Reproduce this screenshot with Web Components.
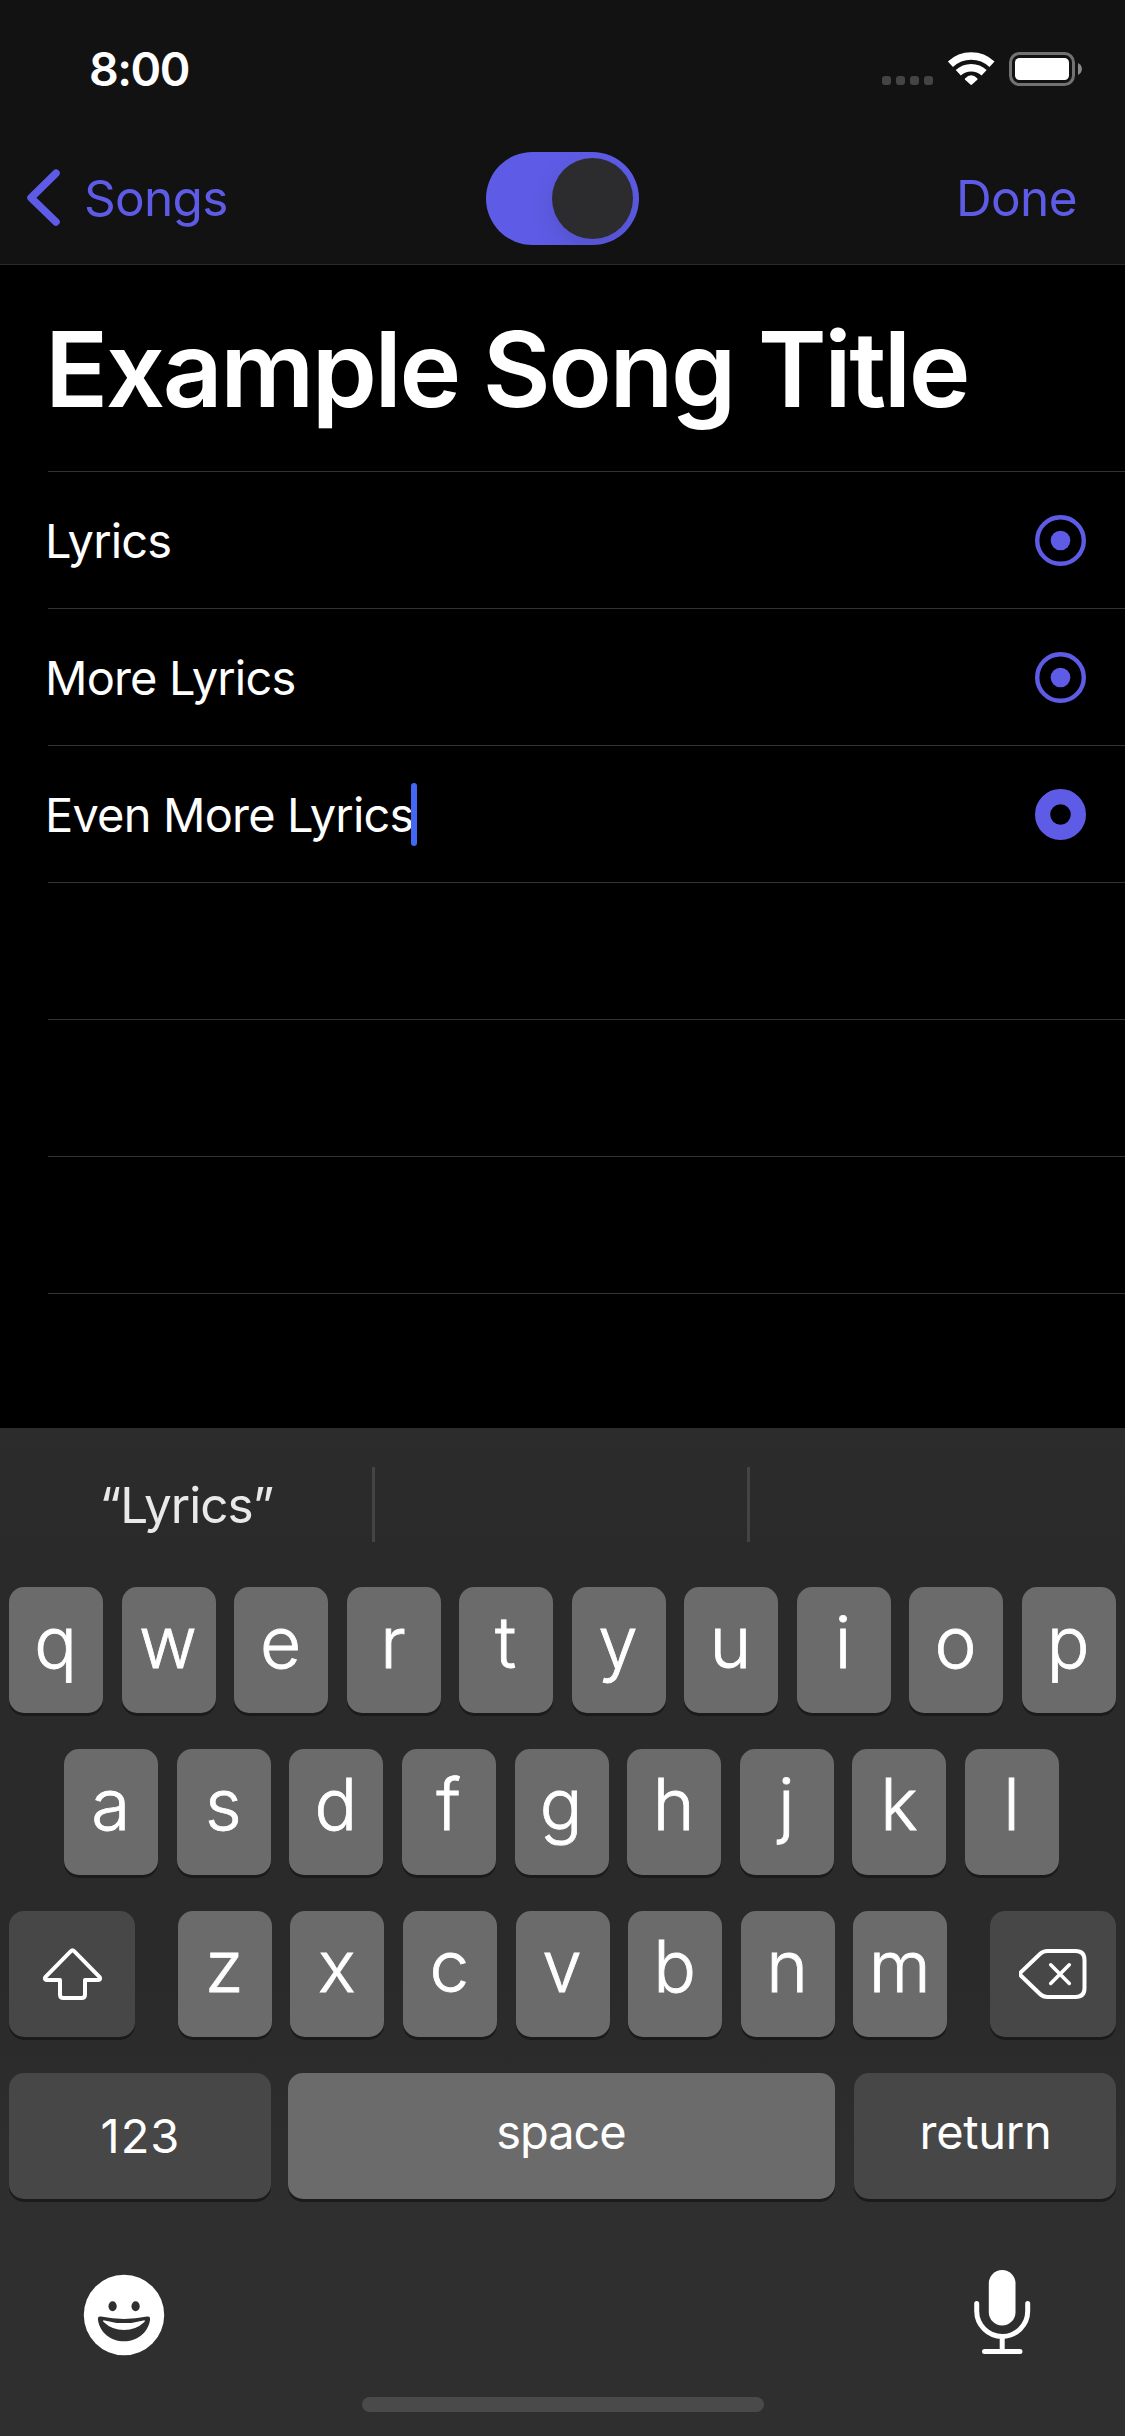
<!DOCTYPE html>
<html lang="en">
<head>
<meta charset="utf-8">
<title>Songs</title>
<style>
  html, body { margin: 0; background: #000; }
  body { font-family: Inter, "Liberation Sans", sans-serif; color: #fff; --accent: #5e5ce6; }
</style>
</head>
<body>
<song-app>
  <status-bar slot="status">8:00</status-bar>
  <nav-bar slot="nav"><span slot="back">Songs</span><toggle-switch slot="middle"></toggle-switch><span slot="action">Done</span></nav-bar>
  <song-title>Example Song Title</song-title>
  <lyric-row mark="dot">Lyrics</lyric-row>
  <lyric-row mark="dot">More Lyrics</lyric-row>
  <lyric-row mark="ring" editing>Even More Lyrics</lyric-row>
  <lyric-row></lyric-row>
  <lyric-row></lyric-row>
  <lyric-row></lyric-row>
  <lyric-row></lyric-row>
  <key-board slot="keyboard"></key-board>
</song-app>
<script>
const define = (name, html) => customElements.define(name, class extends HTMLElement {
  constructor() {
    super();
    this.attachShadow({ mode: 'open' });
  }
  connectedCallback() {
    const t = document.createElement('template');
    t.innerHTML = typeof html === 'function' ? html(this) : html;
    this.shadowRoot.replaceChildren(t.content.cloneNode(true));
  }
});

define('song-app', `
<style>
  :host { display: flex; flex-direction: column; width: 1125px; height: 2436px; background: #000; overflow: hidden; }
  header { flex: none; height: 264px; background: #121212; border-bottom: 1px solid #2b2b2b; }
  main { flex: none; height: 1163px; overflow: hidden; }
</style>
<header><slot name="status"></slot><slot name="nav"></slot></header>
<main><slot></slot></main>
<slot name="keyboard"></slot>`);

define('status-bar', `
<style>
  :host { display: flex; box-sizing: border-box; height: 132px; padding: 5px 43px 0 89px; align-items: center; justify-content: space-between;
    font-size: 46.5px; font-weight: 600; letter-spacing: -1.5px; }
  svg { display: block; }
</style>
<span><slot></slot></span>
<svg width="200" height="34" viewBox="882 52 200 34">
  <g fill="#444"><rect x="882" y="76" width="9" height="9" rx="3"/><rect x="896" y="76" width="9" height="9" rx="3"/><rect x="910" y="76" width="9" height="9" rx="3"/><rect x="924" y="76" width="9" height="9" rx="3"/></g>
  <g fill="none" stroke="#fff" stroke-width="7.4">
    <path d="M950.4 64.3A30.3 30.3 0 0 1 992 64.3"/>
    <path d="M958.3 72.8A18.8 18.8 0 0 1 984.1 72.8"/>
  </g>
  <path d="M965 78.6Q971.2 71.8 977.4 78.6Q977.8 79.2 977.3 79.7L972 84.6Q971.2 85.3 970.4 84.6L965.1 79.7Q964.6 79.2 965 78.6Z" fill="#fff"/>
  <rect x="1010.5" y="53.5" width="63" height="31" rx="9" fill="none" stroke="#727272" stroke-width="3"/>
  <rect x="1015" y="58" width="54" height="22" rx="4.5" fill="#fff"/>
  <path d="M1078 63C1083.200 65.500 1083.200 72.500 1078 75Z" fill="#8a8a8a"/>
</svg>`);

define('nav-bar', `
<style>
  :host { display: grid; grid-template-columns: 1fr auto 1fr; align-items: center; height: 132px; padding: 0 48px 0 26px;
    color: var(--accent); font-size: 49.5px; box-sizing: border-box; }
  .back { display: flex; align-items: center; gap: 22px; letter-spacing: -.7px; }
  .mid { padding-left: 22px; padding-top: 1px; }
  .done { justify-self: end; letter-spacing: -.6px; }
  svg { display: block; margin-top: -1px; }
</style>
<div class="back"><svg width="36" height="60" viewBox="26 168 36 60"><path d="M56 173.200L31 197.700L56 222" fill="none" stroke="var(--accent)" stroke-width="7.500" stroke-linecap="round" stroke-linejoin="round"/></svg><slot name="back"></slot></div>
<div class="mid"><slot name="middle"></slot></div>
<div class="done"><slot name="action"></slot></div>`);

define('toggle-switch', `
<style>
  :host { display: flex; justify-content: flex-end; box-sizing: border-box; width: 153px; height: 93px; padding: 6px; border-radius: 47px; background: var(--accent); overflow: hidden; }
  i { width: 81px; height: 81px; border-radius: 50%; background: #2c2c2e; box-shadow: 0 9px 24px rgba(0,0,0,.12); }
</style><i></i>`);

define('song-title', `
<style>
  :host { display: flex; align-items: center; height: 206px; box-sizing: border-box; padding: 2px 0 0 45px; font-size: 104.5px; font-weight: 600; letter-spacing: -2.45px; white-space: nowrap; }
</style><slot></slot>`);

define('lyric-row', el => `
<style>
  :host { display: flex; height: 137px; padding-left: 45px; }
  .row { flex: 1; display: flex; align-items: center; justify-content: space-between; box-sizing: border-box; padding-right: 39px;
    background: linear-gradient(#333, #333) 3px 0 / 100% 1px no-repeat; padding-top: 1px; }
  .text { display: flex; align-items: center; font-size: 47px; letter-spacing: -.82px; }
  .caret { width: 6px; height: 63px; margin-left: -2px; border-radius: 3px; background: #4169f5; }
  svg { display: block; }
</style>
<div class="row">
  <div class="text"><span><slot></slot></span>${el.hasAttribute('editing') ? '<i class="caret"></i>' : ''}</div>
  ${{ dot: `<svg width="51" height="51"><circle cx="25.500" cy="25.500" r="23.300" fill="none" stroke="var(--accent)" stroke-width="4.400"/><circle cx="25.500" cy="25.500" r="9.800" fill="var(--accent)"/></svg>`,
      ring: `<svg width="51" height="51"><circle cx="25.500" cy="25.500" r="17.900" fill="none" stroke="var(--accent)" stroke-width="15.200"/></svg>` }[el.getAttribute('mark')] || ''}
</div>`);

define('key-cap', `
<style>
  :host { display: flex; flex: none; align-items: center; justify-content: center; box-sizing: border-box; width: 94px; height: 126px; padding: 0 1px 16px 0;
    border-radius: 15px; background: #6b6b6b; box-shadow: 0 3px 0 #1b1b1b; font-size: 71px; font-weight: 300; -webkit-text-stroke: .8px #fff; line-height: 1; }
  :host([dark]) { background: #474747; }
  :host([word]) { font-size: 47px; font-weight: 400; -webkit-text-stroke: 0; padding-bottom: 9px; }
  :host([icon]) { width: 126px; padding: 0 0 0 1px; }
  :host([digits]) { padding: 0 0 1px 1px; }
</style><slot></slot>`);

define('suggestion-bar', `
<style>
  :host { display: grid; grid-template-columns: 372px 3px 372px 3px 1fr; align-items: center; height: 153px; }
  i { height: 75px; background: #444; }
  span { justify-self: center; font-size: 49.5px; letter-spacing: -1px; color: #e9e9e9; padding-left: 1px; }
</style><span><slot></slot></span><i></i><b></b><i></i>`);

const keys = s => [...s].map(c => `<key-cap>${c}</key-cap>`).join('');

define('key-board', `
<style>
  :host { display: flex; flex-direction: column; flex: none; height: 1008px; background: linear-gradient(#2c2c2c 0, #2a2a2a 12%, #2a2a2a 55%, #2f2f2f 78%, #2f2f2f); }
  .keys { display: flex; flex-direction: column; gap: 36px; padding-top: 6px; }
  .r { display: flex; gap: 18.5px; padding: 0 9px; }
  .r2 { gap: 18.6px; padding-left: 64.3px; }
  .r3 { justify-content: space-between; }
  .r3 div { display: flex; gap: 18.600px; }
  .r4 { gap: 0; justify-content: space-between; }
  .side { width: 262px; }
  .space { width: 547px; margin-left: -2px; }
  footer { display: flex; justify-content: space-between; align-items: flex-start; padding: 70px 94px 0 83px; }
  .emoji { margin-top: 5px; }
  svg { display: block; }
  .home { width: 402px; height: 15px; border-radius: 8px; background: #4a4a4a; margin: 40px auto 0; }
</style>
<suggestion-bar>“Lyrics”</suggestion-bar>
<div class="keys">
  <div class="r">${keys('qwertyuiop')}</div>
  <div class="r r2">${keys('asdfghjkl')}</div>
  <div class="r r3">
    <key-cap dark icon><svg width="64" height="56" viewBox="41 1946 64 56"><path d="M70.900 1951.200Q72.500 1949.600 74.100 1951.200L99.200 1976.600Q100.700 1978.400 99.600 1979.600Q99.100 1980.100 98 1980.100H85V1994.500Q85 1998 81.500 1998H63.500Q60 1998 60 1994.500V1980.100H47Q45.900 1980.100 45.400 1979.600Q44.300 1978.400 45.800 1976.600Z" fill="none" stroke="#fff" stroke-width="4" stroke-linejoin="round"/></svg></key-cap>
    <div>${keys('zxcvbnm')}</div>
    <key-cap dark icon><svg width="70" height="52" viewBox="1018.500 1948 70 52"><g fill="none" stroke="#fff" stroke-width="4" stroke-linecap="round" stroke-linejoin="round"><path d="M1047 1951H1075Q1084 1951 1084 1960V1988Q1084 1997 1075 1997H1047Q1042.500 1997 1039.500 1994L1020.500 1975.800Q1018.700 1974 1020.500 1972.200L1039.500 1954Q1042.500 1951 1047 1951Z" /><path d="M1050.200 1964.800L1068.800 1983.400M1068.800 1964.800L1050.200 1983.400" stroke-width="3.600"/></g></svg></key-cap>
  </div>
  <div class="r r4">
    <key-cap dark word digits class="side"><span style="letter-spacing:1px">123</span></key-cap>
    <key-cap word class="space"><span style="letter-spacing:-1.07px">space</span></key-cap>
    <key-cap dark word class="side"><span style="letter-spacing:-.28px;padding-left:2px">return</span></key-cap>
  </div>
</div>
<footer>
  <svg class="emoji" width="82" height="82" viewBox="83 2274 82 82"><circle cx="124" cy="2315" r="40.200" fill="#fff"/><g fill="#2f2f2f"><ellipse cx="112.600" cy="2306.300" rx="4.100" ry="5"/><ellipse cx="135.600" cy="2306.300" rx="4.100" ry="5"/><path d="M101 2316.600Q124 2321.400 147 2316.600Q150.600 2316 150 2320C148 2333 137 2341.300 124 2341.300C111 2341.300 100 2333 98 2320Q97.400 2316 101 2316.600Z"/></g><path d="M104.600 2320.400Q124 2325.800 143.400 2320.400Q146 2320 144.400 2322Q136 2330 124 2330Q112 2330 103.600 2322Q102 2320 104.600 2320.400Z" fill="#fff"/></svg>
  <svg width="58" height="88" viewBox="973.500 2269 58 88"><rect x="989.300" y="2270" width="26.700" height="55.500" rx="13.300" fill="#fff"/><g fill="none" stroke="#fff" stroke-width="5" stroke-linecap="round"><path d="M977.200 2303.500V2311A25.500 25.500 0 0 0 1028.200 2311V2303.500"/><path d="M1002.700 2337V2351M985 2351.500H1020.500"/></g></svg>
</footer>
<div class="home"></div>`);
</script>
</body>
</html>
